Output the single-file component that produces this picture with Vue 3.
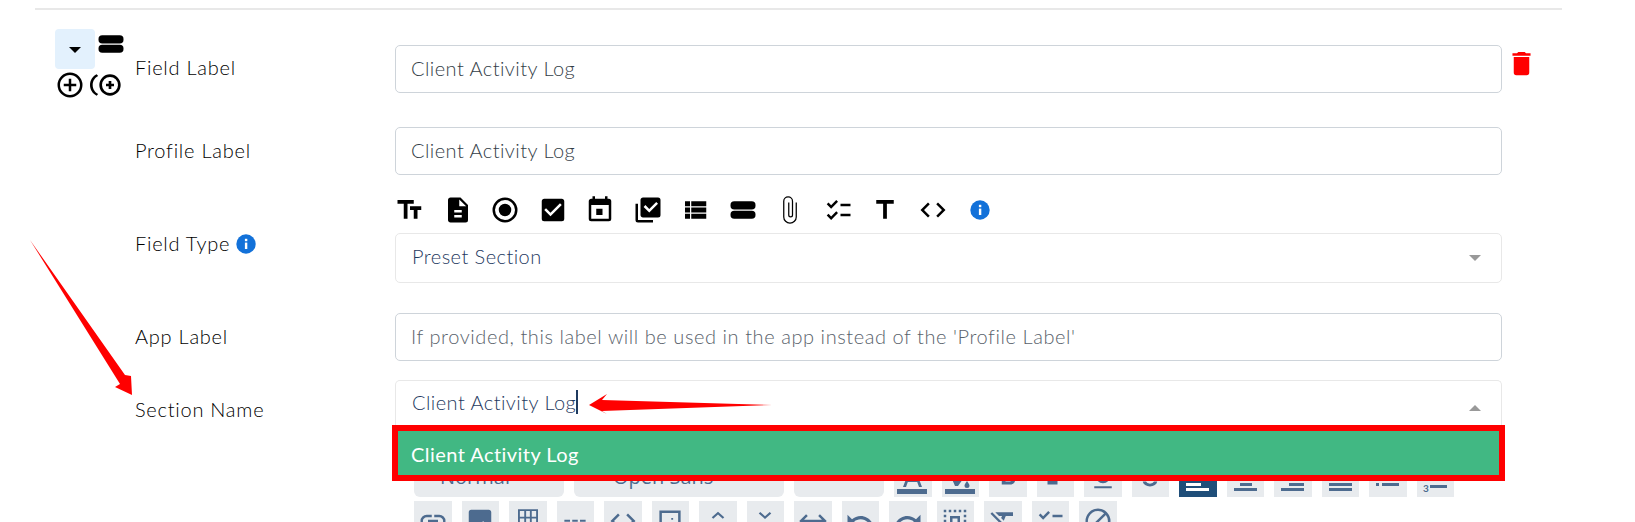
<script setup>
const P = {
  size: 'M2 4V7H7V19H10V7H15V4H2M21 9H12V12H15V19H18V12H21V9Z',
  file: 'M13,9H18.5L13,3.5V9M6,2H14L20,8V20A2,2 0 0,1 18,22H6C4.89,22 4,21.1 4,20V4C4,2.89 4.89,2 6,2M15,18V16H9V18H15M15,14V12H9V14H15Z',
  radio: 'M12,20A8,8 0 0,1 4,12A8,8 0 0,1 12,4A8,8 0 0,1 20,12A8,8 0 0,1 12,20M12,2A10,10 0 0,0 2,12A10,10 0 0,0 12,22A10,10 0 0,0 22,12A10,10 0 0,0 12,2M12,7A5,5 0 0,0 7,12A5,5 0 0,0 12,17A5,5 0 0,0 17,12A5,5 0 0,0 12,7Z',
  check: 'M10,17L5,12L6.41,10.58L10,14.17L17.59,6.58L19,8M19,3H5C3.89,3 3,3.89 3,5V19A2,2 0 0,0 5,21H19A2,2 0 0,0 21,19V5C21,3.89 20.1,3 19,3Z',
  cal: 'M9,11H14V16H9M19,19H5V8H19M19,3H18V1H16V3H8V1H6V3H5C3.89,3 3,3.9 3,5V19A2,2 0 0,0 5,21H19A2,2 0 0,0 21,19V5A2,2 0 0,0 19,3Z',
  multi: 'M22,16A2,2 0 0,1 20,18H8C6.89,18 6,17.1 6,16V4C6,2.89 6.89,2 8,2H20A2,2 0 0,1 22,4V16M16,20V22H4A2,2 0 0,1 2,20V7H4V20H16M13,14L20,7L18.59,5.59L13,11.17L9.91,8.09L8.5,9.5L13,14Z',
  list: 'M9,5V9H21V5M9,19H21V15H9M9,14H21V10H9M4,9H8V5H4M4,19H8V15H4M4,14H8V10H4V14Z',
  bars: 'M5 5H19A3 3 0 0 1 22 8V8.5A3 3 0 0 1 19 11.5H5A3 3 0 0 1 2 8.5V8A3 3 0 0 1 5 5ZM5 12.5H19A3 3 0 0 1 22 15.5V16A3 3 0 0 1 19 19H5A3 3 0 0 1 2 16V15.5A3 3 0 0 1 5 12.5Z',
  clip: 'M16.5,6V17.5A4.5,4.5 0 0,1 7.5,17.5V5A3,3 0 0,1 13.5,5V16A1,1 0 0,1 11.5,16V6H10.5V16A2,2 0 0,0 14.5,16V5A4,4 0 0,0 6.5,5V17.5A5.5,5.5 0 0,0 17.5,17.5V6H16.5Z',
  checks: 'M3 7.4L4.4 6L6.5 8.1L10.6 4L12 5.4L6.5 10.9ZM3 16.4L4.4 15L6.5 17.1L10.6 13L12 14.4L6.5 19.9ZM14 7H22V9H14ZM14 15H22V17H14Z',
  title: 'M5,4V7H10.5V19H13.5V7H19V4H5Z',
  code: 'M14.6,16.6L19.2,12L14.6,7.4L16,6L22,12L16,18L14.6,16.6M9.4,16.6L4.8,12L9.4,7.4L8,6L2,12L8,18L9.4,16.6Z',
  bold: 'M13.5,15.5H10V12.5H13.5A1.5,1.5 0 0,1 15,14A1.5,1.5 0 0,1 13.5,15.5M10,6.5H13A1.5,1.5 0 0,1 14.5,8A1.5,1.5 0 0,1 13,9.5H10M15.6,10.79C16.57,10.11 17.25,9 17.25,8C17.25,5.74 15.5,4 13.25,4H7V18H14.04C16.14,18 17.75,16.3 17.75,14.21C17.75,12.69 16.89,11.39 15.6,10.79Z',
  italic: 'M10,4V7H12.21L8.79,15H6V18H14V15H11.79L15.21,7H18V4H10Z',
  underline: 'M5,21H19V19.4H5V21M12,17A6,6 0 0,0 18,11V3H15.5V11A3.5,3.5 0 0,1 12,14.5A3.5,3.5 0 0,1 8.5,11V3H6V11A6,6 0 0,0 12,17Z',
  strike: 'M6 11H18V12.6H6ZM12 19.5A6 4.5 0 0 1 6.2 15.5H8.8A3.6 2.6 0 0 0 12 17.3A3.6 2.6 0 0 0 15.2 15.5H17.8A6 4.5 0 0 1 12 19.5ZM12 4A6 4 0 0 1 17.6 8.5H15A3.4 2.4 0 0 0 12 6.4A3.4 2.4 0 0 0 9 8.5H6.4A6 4 0 0 1 12 4Z',
  link: 'M3.9,12C3.9,10.29 5.29,8.9 7,8.9H11V7H7A5,5 0 0,0 2,12A5,5 0 0,0 7,17H11V15.1H7C5.29,15.1 3.9,13.71 3.9,12M8,13H16V11H8V13M17,7H13V8.9H17C18.71,8.9 20.1,10.29 20.1,12C20.1,13.71 18.71,15.1 17,15.1H13V17H17A5,5 0 0,0 22,12A5,5 0 0,0 17,7Z',
  image: 'M8.5,13.5L11,16.5L14.5,12L19,18H5M21,19V5C21,3.89 20.1,3 19,3H5A2,2 0 0,0 3,5V19A2,2 0 0,0 5,21H19A2,2 0 0,0 21,19Z',
  table: 'M4,2.5H20V21.5H4ZM5.5,4V8.5H9V4ZM10.5,4V8.5H13.5V4ZM15,4V8.5H18.5V4ZM5.5,10V14.5H9V10ZM10.5,10V14.5H13.5V10ZM15,10V14.5H18.5V10ZM5.5,16V20H9V16ZM10.5,16V20H13.5V16ZM15,16V20H18.5V16Z',
  dashes: 'M3.5 11H8V12.5H3.5ZM9.8 11H14.2V12.5H9.8ZM16 11H20.5V12.5H16Z',
  dotted: 'M3.5 3.5H20.5V21H3.5ZM5.5 5.5V19H18.5V5.5ZM10 13H11.5V14.5H10ZM13 13H14.5V14.5H13ZM13 9.5H14.5V11H13ZM10 16.5H11.5V18H10ZM13 16.5H14.5V18H13Z',
  up: 'M8.2 10.2L12 6.8L15.8 10.2L17 9L12 4.6L7 9Z',
  down: 'M8.2 4.8L12 8.2L15.8 4.8L17 6L12 10.4L7 6Z',
  swap: 'M6.45,17.45L1,12L6.45,6.55L7.86,7.96L4.83,11H19.17L16.14,7.96L17.55,6.55L23,12L17.55,17.45L16.14,16.04L19.17,13H4.83L7.86,16.04L6.45,17.45Z',
  undo: 'M12.5,8C9.85,8 7.45,9 5.6,10.6L2,7V16H11L7.38,12.38C8.77,11.22 10.54,10.5 12.5,10.5C16.04,10.5 19.05,12.81 20.1,16L22.47,15.22C21.08,11.03 17.15,8 12.5,8Z',
  redo: 'M18.4,10.6C16.55,9 14.15,8 11.5,8C6.85,8 2.92,11.03 1.54,15.22L3.9,16C4.95,12.81 7.95,10.5 11.5,10.5C13.45,10.5 15.23,11.22 16.62,12.38L13,16H22V7L18.4,10.6Z',
  selectAll: 'M8 8H16V16H8ZM10 10V14H14V10ZM15,5H17V3H15M15,21H17V19H15M19,17H21V15H19M19,9H21V7H19M19,21H21V19H19M19,13H21V11H19M11,21H13V19H11M9,3H7V5H9M3,17H5V15H3M5,21V19H3V21M19,3V5H21V3M13,3H11V5H13M3,9H5V7H3M7,21H9V19H7M3,13H5V11H3M3,5H5V3H3Z',
  clear: 'M6,5V5.18L8.82,8H11.22L10.5,9.68L12.6,11.78L14.21,8H20V5H6M3.27,5L2,6.27L8.97,13.24L6.5,19H9.5L11.07,15.34L16.73,21L18,19.73L3.55,5.27L3.27,5Z',
  block: 'M12 2A10 10 0 1 0 12 22A10 10 0 1 0 12 2M12 4A8 8 0 0 1 16.9 5.7L5.7 16.9A8 8 0 0 1 12 4M18.3 7.1A8 8 0 0 1 7.1 18.3Z'
}

const fieldIcons = ['size', 'file', 'radio', 'check', 'cal', 'multi', 'list', 'bars', 'clip', 'checks', 'title', 'code'].map((k) => P[k])

const styleButtons = [
  { box: 'M3 32H33V37H3ZM17 9H20L28 30H25L23.2 25H13.8L12 30H9ZM15 22H22L18.5 13Z' },
  { box: 'M3 32H33V37H3ZM10 22H21L16 29H13ZM25 24C26.5 26 27.5 27.5 27.5 28.5A2.5 2.5 0 0 1 22.5 28.5C22.5 27.5 23.5 26 25 24Z' },
  { icon: P.bold },
  { icon: P.italic },
  { icon: P.underline },
  { icon: P.strike },
  { box: 'M7 11H30V14H7ZM7 16H22V19H7ZM7 21H30V24H7ZM7 26H22V29H7ZM7 31H30V34H7Z', active: true },
  { box: 'M7 11H30V14H7ZM13 16H25V19H13ZM7 21H30V24H7ZM13 26H25V29H13ZM7 31H30V34H7Z' },
  { box: 'M7 11H30V14H7ZM15 16H30V19H15ZM7 21H30V24H7ZM15 26H30V29H15ZM7 31H30V34H7Z' },
  { box: 'M7 11H30V14H7ZM7 16H30V19H7ZM7 21H30V24H7ZM7 26H30V29H7ZM7 31H30V34H7Z' },
  { box: 'M7 10H10V13H7ZM13 10H30V13H13ZM7 18H10V21H7ZM13 18H30V21H13ZM7 26H10V29H7ZM13 26H30V29H13Z' },
  { box: 'M13 12H30V15H13ZM13 20H30V23H13ZM13 28H30V31H13Z', number: true }
]

const insertButtons = ['link', 'image', 'table', 'dashes', 'code', 'dotted', 'up', 'down', 'swap', 'undo', 'redo', 'selectAll', 'clear', 'checks', 'block'].map((k) => P[k])
</script>

<template>
  <div class="page">
    <div class="rule"></div>

    <div class="row row-first">
      <div class="handle">
        <button class="collapse" type="button"><span class="tri"></span></button>
        <svg class="bars" viewBox="0 0 24 24"><path :d="P.bars" /></svg>
        <svg class="add" viewBox="0 0 24 24"><path d="M12,20C7.59,20 4,16.41 4,12C4,7.59 7.59,4 12,4C16.41,4 20,7.59 20,12C20,16.41 16.41,20 12,20M12,2A10,10 0 0,0 2,12A10,10 0 0,0 12,22A10,10 0 0,0 22,12A10,10 0 0,0 12,2M13,7H11V11H7V13H11V17H13V13H17V11H13V7Z" /></svg>
        <svg class="add-many" viewBox="0 0 24 24"><path d="M15,4A8,8 0 0,1 23,12A8,8 0 0,1 15,20A8,8 0 0,1 7,12A8,8 0 0,1 15,4M15,6A6,6 0 0,0 9,12A6,6 0 0,0 15,18A6,6 0 0,0 21,12A6,6 0 0,0 15,6M14,9H16V11H18V13H16V15H14V13H12V11H14V9M2,12C2,14.97 3.67,17.5 6.1,18.78L5,20C2,18.5 0,15.5 0,12C0,8.5 2,5.5 5,4L6.1,5.22C3.67,6.5 2,9 2,12Z" /></svg>
      </div>
      <label class="label label-first">Field Label</label>
      <input class="input input-first" value="Client Activity Log" readonly />
      <svg class="trash" viewBox="0 0 24 24"><path d="M19,4H15.5L14.5,3H9.5L8.5,4H5V6H19M6,19A2,2 0 0,0 8,21H16A2,2 0 0,0 18,19V7H6V19Z" /></svg>
    </div>

    <div class="row row-profile">
      <label class="label label-col">Profile Label</label>
      <input class="input" value="Client Activity Log" readonly />
    </div>

    <div class="row row-type">
      <label class="label label-type">
        Field Type
        <svg class="info-small" viewBox="0 0 20 20"><circle cx="10" cy="10" r="9.7" /><rect x="8.9" y="8.6" width="2.4" height="6.4" fill="#fff" /><rect x="8.9" y="4.8" width="2.4" height="2.4" fill="#fff" /></svg>
      </label>
      <div class="control">
        <div class="type-icons">
          <svg v-for="(d, i) in fieldIcons" :key="i" class="type-icon" viewBox="0 0 24 24"><path :d="d" /></svg>
          <svg class="type-icon info-big" viewBox="0 0 30 30"><circle cx="15" cy="15" r="9.7" /><rect x="13.9" y="13.6" width="2.4" height="6.4" fill="#fff" /><rect x="13.9" y="9.8" width="2.4" height="2.4" fill="#fff" /></svg>
        </div>
        <div class="select select-closed">
          <span>Preset Section</span>
          <span class="arrow-down"></span>
        </div>
      </div>
    </div>

    <div class="row row-app">
      <label class="label label-col">App Label</label>
      <input class="input input-hint" placeholder="If provided, this label will be used in the app instead of the 'Profile Label'" readonly />
    </div>

    <div class="row row-section">
      <label class="label label-section">Section Name</label>
      <div class="control">
        <div class="select select-open">
          <span class="typed">Client Activity Log<i class="cursor"></i></span>
          <span class="arrow-up"></span>
          <div class="menu"><div class="option">Client Activity Log</div></div>
        </div>
        <div class="editor-bar">
          <div class="bar-line">
            <div class="pick pick-a"><span>Normal</span></div>
            <div class="pick pick-b"><span>Open Sans</span></div>
            <div class="pick pick-c"></div>
            <div v-for="(b, i) in styleButtons" :key="i" class="tool" :class="{ on: b.active }">
              <svg v-if="b.box" class="tool-box" viewBox="0 0 37 40">
                <path :d="b.box" />
                <text v-if="b.number" x="6" y="35" class="num">3</text>
              </svg>
              <svg v-else class="tool-icon" viewBox="0 0 24 24"><path :d="b.icon" /></svg>
            </div>
          </div>
          <div class="bar-line">
            <div v-for="(d, i) in insertButtons" :key="i" class="tool">
              <svg class="tool-icon" viewBox="0 0 24 24"><path :d="d" /></svg>
            </div>
          </div>
        </div>
      </div>
    </div>

    <svg class="notes" viewBox="0 0 1635 522">
      <polygon points="30,240 125,375 131,376 132,395 115,387 120,384" />
      <polygon points="589,405 607,394 602,400 772,405 602,411 607,414" />
    </svg>
  </div>
</template>

<style scoped>
.page {
  position: relative;
  width: 1635px;
  height: 522px;
  overflow: hidden;
  background: #fff;
  font-family: Lato, "Open Sans", sans-serif;
  font-size: 20px;
  font-weight: 300;
  letter-spacing: 0.45px;
  color: #000;
}
.rule {
  height: 2px;
  width: 1527px;
  margin: 8px 0 0 35px;
  background: #e8e8e8;
}
.row {
  display: grid;
  grid-template-columns: 260px 1107px;
  margin-left: 135px;
}
.row-first {
  grid-template-columns: 80px 260px 1107px 36px;
  margin: 19px 0 0 55px;
  height: 71px;
}
.row-profile { margin-top: 27px; }
.row-type { margin-top: 19px; }
.row-app { margin-top: 30px; }
.row-section { margin-top: 19px; }

.handle {
  display: flex;
  flex-wrap: wrap;
  align-content: flex-start;
  width: 80px;
}
.collapse {
  display: flex;
  align-items: center;
  justify-content: center;
  width: 40px;
  height: 40px;
  padding: 0;
  border: 0;
  border-radius: 4px;
  background: #e3f1fd;
}
.tri {
  width: 0;
  height: 0;
  margin-top: 2px;
  border-left: 6px solid transparent;
  border-right: 6px solid transparent;
  border-top: 6px solid #000;
}
.bars { width: 30px; height: 30px; margin-left: 1px; }
.add { width: 30px; height: 30px; margin-top: 1px; }
.add-many { width: 32px; height: 32px; margin-left: 5px; }

.label { line-height: 24px; letter-spacing: 0.75px; }
.label-first { margin-top: 26px; }
.label-col { align-self: center; padding-bottom: 2px; }
.label-type { align-self: start; margin-top: 37px; display: flex; align-items: center; gap: 6px; }
.label-section { align-self: start; margin-top: 17px; }
.info-small { width: 20px; height: 20px; margin-top: 1px; fill: #1271d9; }

.input {
  box-sizing: border-box;
  width: 1107px;
  height: 48px;
  padding: 0 15px 2px;
  border: 1px solid #ced4da;
  border-radius: 5px;
  font: inherit;
  letter-spacing: inherit;
  color: #333d47;
  outline: none;
  background: #fff;
}
.input-hint { letter-spacing: 0.57px; }
.input::placeholder { color: #59626b; opacity: 1; }
.input-first { margin-top: 16px; }
.trash { width: 31px; height: 31px; margin: 19px 0 0 4px; fill: #f00; }

.type-icons { display: flex; gap: 17.5px; height: 30px; margin-top: 1px; }
.type-icon { width: 30px; height: 30px; flex: none; }
.info-big { fill: #1271d9; }

.select {
  position: relative;
  box-sizing: border-box;
  display: flex;
  justify-content: space-between;
  height: 50px;
  padding: 0 20px 0 16px;
  border: 1px solid #e8e8e8;
  border-radius: 5px;
  color: #1f3a5f;
}
.select-closed { margin-top: 8px; align-items: center; padding-bottom: 4px; }
.select-open { border-bottom-color: transparent; align-items: flex-start; padding-top: 9px; }
.typed { display: flex; align-items: center; }
.cursor { width: 2px; height: 24px; background: #1f3a5f; }
.arrow-down,
.arrow-up { width: 0; height: 0; border-left: 6px solid transparent; border-right: 6px solid transparent; }
.arrow-down { border-top: 6px solid #999; margin-top: 4px; }
.arrow-up { border-bottom: 6px solid #999; margin-top: 15px; }
.menu {
  position: absolute;
  left: -4px;
  top: 44px;
  box-sizing: border-box;
  width: 1113px;
  height: 56px;
  border: 6px solid #f00;
  background: #41b883;
  z-index: 2;
}
.option { padding: 0 13px; line-height: 46px; color: #fff; font-weight: 400; }

.editor-bar {
  display: flex;
  flex-direction: column;
  gap: 4px;
  margin-top: 27px;
  padding-left: 19px;
}
.bar-line { display: flex; gap: 10px; height: 40px; }
.pick {
  height: 40px;
  border-radius: 6px;
  background: #e8ebee;
  color: #4d6b8f;
  font-family: "Open Sans", sans-serif;
  font-size: 20px;
  font-weight: 400;
  letter-spacing: 0;
  line-height: 40px;
}
.pick-a { width: 150px; padding-left: 26px; box-sizing: border-box; }
.pick-b { width: 210px; padding-left: 39px; box-sizing: border-box; }
.pick-c { width: 90px; }
.tool {
  flex: none;
  display: flex;
  align-items: center;
  justify-content: center;
  width: 37.5px;
  height: 40px;
  background: #e8ebee;
  fill: #4d6b8f;
}
.tool.on { background: #1f4e79; fill: #fff; }
.tool-box { width: 37px; height: 40px; }
.tool-icon { width: 30px; height: 30px; }
.num { font-family: Lato, sans-serif; font-size: 10px; font-weight: 700; letter-spacing: 0; }

.notes {
  position: absolute;
  inset: 0;
  width: 1635px;
  height: 522px;
  fill: #f00;
  pointer-events: none;
  z-index: 3;
}
</style>

<style>
html, body { margin: 0; overflow: hidden; background: #fff; }
</style>
